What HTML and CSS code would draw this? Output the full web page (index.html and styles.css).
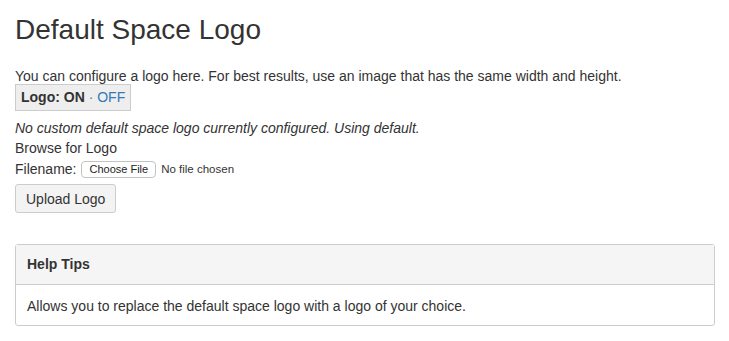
FILE: index.html
```
<!DOCTYPE html>
<html lang="en">

<head>
  <meta charset="UTF-8">
  <meta name="viewport" content="width=device-width, initial-scale=1.0">
  <title>Default Space Logo</title>
  <link rel="stylesheet" href="styles.css">
</head>

<body>
  <div class="page-wrapper">
    <h1 class="heading">Default Space Logo</h1>
    <p class="intro">You can configure a logo here. For best results, use an image that has the same width and height.</p>
    <div class="toggle">
      <span class="toggle-on">Logo: ON</span>
      <span class="toggle-sep">&middot;</span>
      <a href="#" class="toggle-off">OFF</a>
    </div>
    <p class="note">No custom default space logo currently configured. Using default.</p>
    <form class="upload-form">
      <div class="form-label">Browse for Logo</div>
      <div class="file-row">
        <span>Filename:</span>
        <button type="button" class="choose-btn">Choose File</button>
        <span class="file-status">No file chosen</span>
      </div>
      <button type="button" class="upload-btn">Upload Logo</button>
    </form>

    <div class="panel">
      <div class="panel-heading">Help Tips</div>
      <div class="panel-body">Allows you to replace the default space logo with a logo of your choice.</div>
    </div>
  </div>
</body>

</html>
```

FILE: styles.css
```
* {
  margin: 0;
  padding: 0;
  box-sizing: border-box;
  font-family: "Liberation Sans", Arial, sans-serif;
}

html,
body {
  width: 100%;
  background: #fff;
  color: #333;
}

.page-wrapper {
  padding: 13px 14px 0 15px;
  font-size: 14px;
  line-height: 20px;
}

.heading {
  font-size: 28px;
  font-weight: 400;
  line-height: 34px;
  margin-bottom: 19px;
}

.toggle {
  display: inline-block;
  margin-top: -2px;
  padding: 2px 5px 3px 5px;
  background: #eee;
  border: 1px solid #ccc;
  font-size: 14px;
}

.toggle-on {
  font-weight: 700;
}

.toggle-sep {
  color: #777;
}

.toggle-off {
  color: #337ab7;
  text-decoration: none;
}

.note {
  font-style: italic;
  margin-top: 7px;
}

.file-row {
  display: flex;
  align-items: center;
  gap: 5px;
}

.choose-btn {
  font-family: "Liberation Sans", Arial, sans-serif;
  font-size: 11px;
  line-height: 13px;
  color: #222;
  background: #fff;
  border: 1px solid #c3c3c3;
  border-radius: 4px;
  padding: 1px 7px;
  height: 17px;
  margin-top: 2px;
}

.file-status {
  font-size: 11.5px;
  margin-top: 1px;
}

.upload-btn {
  display: block;
  margin-top: 5px;
  font-size: 14px;
  color: #333;
  background: #f3f3f3;
  border: 1px solid #ccc;
  border-radius: 3px;
  padding: 0 10px;
  height: 29px;
}

.panel {
  margin-top: 31px;
  border: 1px solid #ccc;
  border-radius: 3px;
  width: 700px;
}

.panel-heading {
  background: #f5f5f5;
  border-bottom: 1px solid #ccc;
  font-size: 14px;
  font-weight: 700;
  padding: 9px 11px 10px;
}

.panel-body {
  font-size: 14px;
  padding: 11px 11px 9px;
}
```
